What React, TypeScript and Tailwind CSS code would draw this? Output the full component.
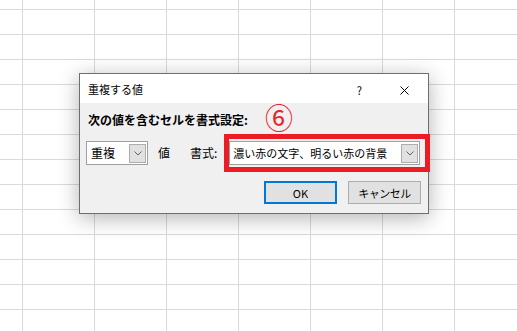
import React from "react";

const Chevron = () => (
  <svg width="8" height="5" viewBox="0 0 8 5" fill="none">
    <path d="M0.5 0.5 L4 4 L7.5 0.5" stroke="#606060" strokeWidth="1" />
  </svg>
);

export default function App() {
  return (
    <div
      className="relative w-[517px] h-[331px] overflow-hidden bg-white bg-[linear-gradient(to_right,#dadada_1px,transparent_1px),linear-gradient(to_bottom,#dadada_1px,transparent_1px)] bg-[size:72px_25px] bg-[position:22px_9px]"
      style={{ fontFamily: '"Noto Sans CJK JP", "Noto Sans", sans-serif' }}
    >
      <div className="absolute left-[79px] top-[73px] w-[350px] h-[141px] border border-[#6e6e6e] bg-[#f0f0f0] shadow-[0_4px_20px_rgba(0,0,0,0.3)] flex flex-col text-[11px] leading-[16px] text-black">
        {/* title bar */}
        <div className="h-[29px] bg-white flex items-center pl-[8px]">
          <span className="mt-[1px] text-[11px]">重複する値</span>
          <span className="ml-auto mr-[38px] mt-[3px] text-[11px]">?</span>
          <svg width="9" height="9" viewBox="0 0 9 9" className="mr-[19px] mt-[4px]">
            <path d="M0.5 0.5 L8.5 8.5 M8.5 0.5 L0.5 8.5" stroke="#000" strokeWidth="1" />
          </svg>
        </div>
        {/* body */}
        <div className="flex-1 flex flex-col pl-[6px] pr-[7px]">
          <div className="pl-[2px] mt-[9px] font-bold text-[12px]">次の値を含むセルを書式設定:</div>
          <div className="mt-[13px] flex items-center h-[24px]">
            <div className="w-[62px] h-[24px] border border-[#a0a0a0] bg-white flex items-center">
              <span className="pl-[4px] flex-1 text-[12px]">重複</span>
              <div className="w-[17px] h-[19px] mr-[1px] bg-[#e1e1e1] border border-[#adadad] flex items-center justify-center">
                <Chevron />
              </div>
            </div>
            <span className="ml-[10px] text-[12px]">値</span>
            <span className="ml-[20px] text-[12px]">書式:</span>
            <div className="ml-[12px] w-[191px] h-[24px] border border-[#a0a0a0] bg-white flex items-center">
              <span className="pl-[3px] flex-1 whitespace-nowrap">濃い赤の文字、明るい赤の背景</span>
              <div className="w-[17px] h-[19px] mr-[1px] bg-[#e1e1e1] border border-[#adadad] flex items-center justify-center">
                <Chevron />
              </div>
            </div>
          </div>
          <div className="mt-[16px] flex justify-end gap-[11px]">
            <button className="w-[73px] h-[23px] border-2 border-[#0078d7] bg-[#e1e1e1] flex items-center justify-center">
              OK
            </button>
            <button className="w-[73px] h-[23px] border border-[#adadad] bg-[#e1e1e1] flex items-center justify-center tracking-[-0.5px]">
              キャンセル
            </button>
          </div>
        </div>
        {/* annotation overlays */}
        <div className="absolute left-[185px] top-[27px] text-[28px] leading-[32px] text-[#e8232a]">⑥</div>
        <div className="absolute left-[144px] top-[60px] w-[206px] h-[38px] border-[5px] border-[#ec1c24]" />
      </div>
    </div>
  );
}
